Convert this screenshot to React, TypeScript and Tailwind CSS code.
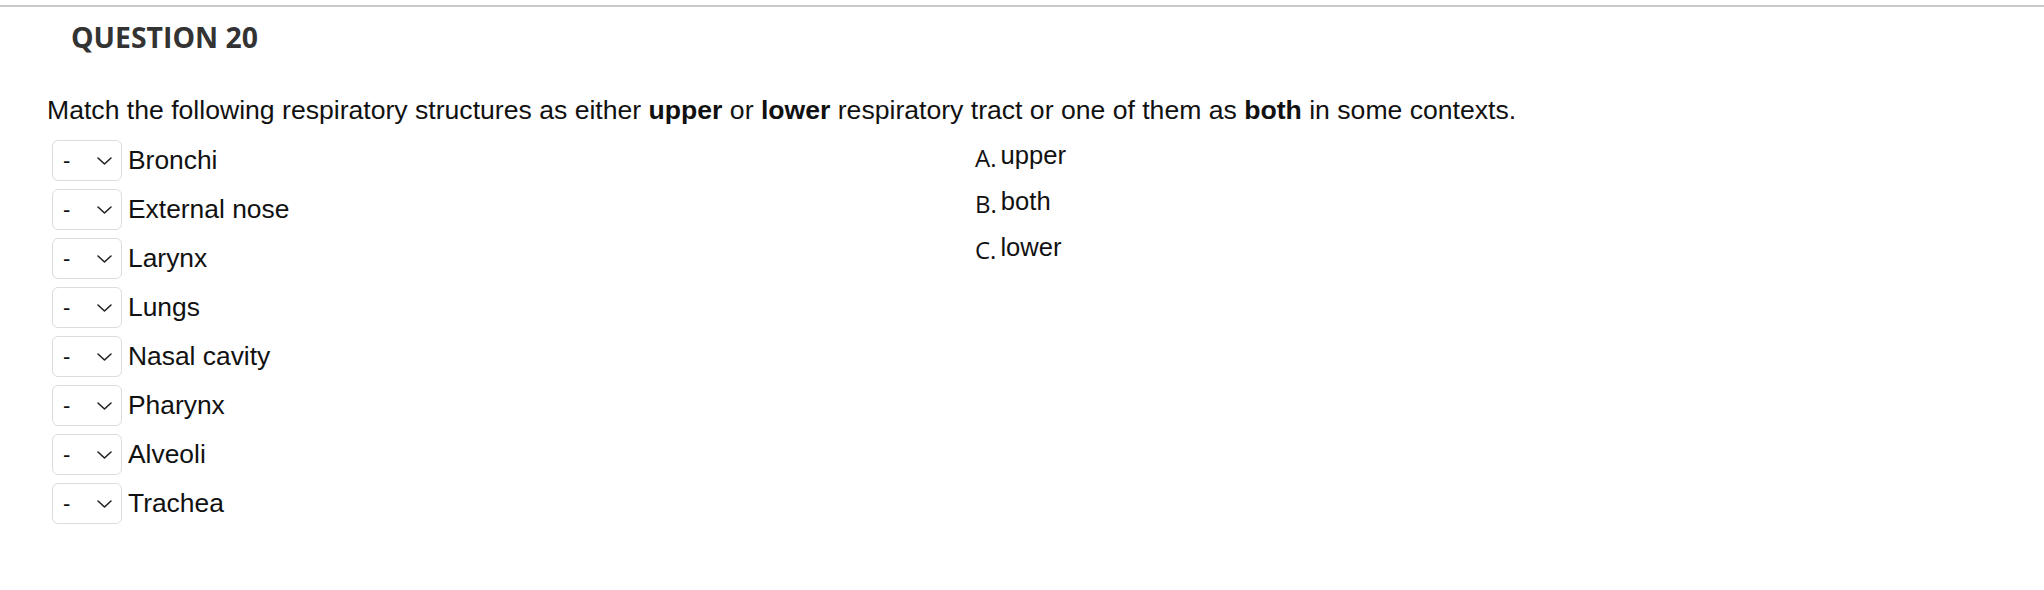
const ITEMS = [
  "Bronchi",
  "External nose",
  "Larynx",
  "Lungs",
  "Nasal cavity",
  "Pharynx",
  "Alveoli",
  "Trachea",
];

const ANSWERS = [
  { key: "A.", label: "upper" },
  { key: "B.", label: "both" },
  { key: "C.", label: "lower" },
];

function Chevron() {
  return (
    <svg width="17" height="10" viewBox="0 0 17 10" fill="none">
      <path d="M2 2l6.5 6 6.5-6" stroke="#222" strokeWidth="1.6" strokeLinecap="round" strokeLinejoin="round" />
    </svg>
  );
}

function Dropdown() {
  return (
    <div className="flex h-[41px] w-[70px] shrink-0 items-center justify-between rounded-[6px] border border-[#dcdcdc] bg-white pl-[10px] pr-[8px]">
      <span className="text-[22px] leading-none text-[#111]">-</span>
      <Chevron />
    </div>
  );
}

export default function App() {
  return (
    <div className="min-h-screen bg-white pt-[5px] text-[#111]" style={{ fontFamily: "'Liberation Sans', Arial, sans-serif" }}>
      <div className="h-[2px] w-full bg-[#c9c9c9]" />

      {/* Heading */}
      <h2 className="mt-[16px] pl-[71px] text-[28.4px] font-bold leading-[28px] text-[#333]" style={{ fontFamily: "'Open Sans', sans-serif" }}>
        QUESTION 20
      </h2>

      {/* Prompt */}
      <p className="mt-[44px] pl-[47px] text-[26.6px] leading-[30px]">
        Match the following respiratory structures as either <b>upper</b> or <b>lower</b> respiratory tract or one of
        them as <b>both</b> in some contexts.
      </p>

      <div className="mt-[15px] flex pl-[52px]">
        {/* Left: dropdowns + items */}
        <div className="flex w-[923px] flex-col gap-[8px]">
          {ITEMS.map((item) => (
            <div key={item} className="flex h-[41px] items-center gap-[6px]">
              <Dropdown />
              <span className="text-[26.4px] leading-[41px]">{item}</span>
            </div>
          ))}
        </div>

        {/* Right: answer choices */}
        <div className="flex flex-col gap-[13px] text-[25.6px] leading-[31px]">
          {ANSWERS.map((a) => (
            <div key={a.key}>
              <span className="mr-[4px] align-[-3px] text-[24px]" style={{ fontFamily: "'Open Sans', sans-serif" }}>
                {a.key}
              </span>
              {a.label}
            </div>
          ))}
        </div>
      </div>
    </div>
  );
}
